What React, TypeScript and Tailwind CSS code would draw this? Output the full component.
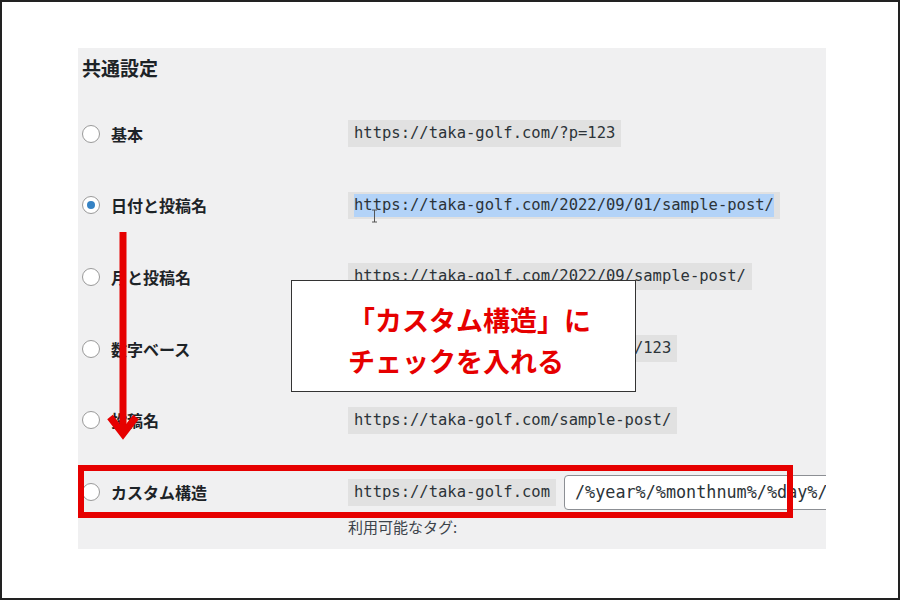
import React from "react";

const jp = { fontFamily: '"Noto Sans CJK JP", "Noto Sans", sans-serif' };
const mono = { fontFamily: '"DejaVu Sans Mono", "Liberation Mono", monospace' };

function Radio({ checked = false }: { checked?: boolean }) {
  return (
    <span className="flex h-[18px] w-[18px] shrink-0 items-center justify-center rounded-full border border-[#9a9a9a] bg-white">
      {checked && <span className="h-[8px] w-[8px] rounded-full bg-[#3582c4]" />}
    </span>
  );
}

function Code({ children, selected = false }: { children: React.ReactNode; selected?: boolean }) {
  return (
    <span
      className="inline-flex shrink-0 items-center whitespace-nowrap bg-[#e1e1e1] px-[6px] py-[2px] text-[15.5px] leading-[23px] text-[#2c3338]"
      style={mono}
    >
      <span className={selected ? "bg-[#b3d3f8]" : ""}>{children}</span>
    </span>
  );
}

function Label({ text, checked }: { text: string; checked?: boolean }) {
  return (
    <div className="flex w-[270px] shrink-0 items-center gap-[11px] pl-[4px]">
      <Radio checked={checked} />
      <span className="whitespace-nowrap text-[16px] font-semibold text-[#1d2327]" style={jp}>
        {text}
      </span>
    </div>
  );
}

function Row({ label, url, checked, selected }: { label: string; url: string; checked?: boolean; selected?: boolean }) {
  return (
    <div className="flex h-[71.6px] items-center">
      <Label text={label} checked={checked} />
      <Code selected={selected}>{url}</Code>
    </div>
  );
}

export default function App() {
  return (
    <div className="relative h-[600px] w-[900px] overflow-hidden bg-white shadow-[inset_0_0_0_2px_#222]">
      <div className="ml-[78px] mt-[48px] h-[501px] w-[748px] overflow-hidden bg-[#f0f0f1]">
        <div className="pl-[4px] pt-[8px] text-[19px] font-bold leading-[24px] text-[#1d2327]" style={jp}>
          共通設定
        </div>
        <div className="mt-[18px] flex flex-col">
          <Row label="基本" url="https://taka-golf.com/?p=123" />
          <Row label="日付と投稿名" url="https://taka-golf.com/2022/09/01/sample-post/" checked selected />
          <Row label="月と投稿名" url="https://taka-golf.com/2022/09/sample-post/" />
          <Row label="数字ベース" url="https://taka-golf.com/archives/123" />
          <Row label="投稿名" url="https://taka-golf.com/sample-post/" />
          <div className="flex items-center pt-[19px]">
            <Label text="カスタム構造" />
            <Code>https://taka-golf.com</Code>
            <div
              className="ml-[8px] flex h-[35px] w-[320px] shrink-0 items-center overflow-hidden whitespace-nowrap rounded-[4px] border border-[#8c8f94] bg-white pl-[10px] text-[16.8px] text-[#2c3338]"
              style={mono}
            >
              /%year%/%monthnum%/%day%/%postname%/
            </div>
          </div>
          <div className="ml-[270px] mt-[7px] whitespace-nowrap text-[15px] leading-[20px] text-[#3c434a]" style={jp}>
            利用可能なタグ:
          </div>
        </div>
      </div>

      {/* text cursor */}
      <svg className="absolute left-[371px] top-[209px]" width="7" height="14" viewBox="0 0 7 14">
        <path d="M1 1h5M3.5 1v12M1 13h5" stroke="#555" strokeWidth="1" fill="none" />
      </svg>

      {/* red arrow */}
      <svg className="absolute left-[100px] top-[228px]" width="46" height="216" viewBox="0 0 46 216">
        <path d="M23 4V204" stroke="#e60000" strokeWidth="7" fill="none" />
        <path d="M10 189L23 206L36 189" stroke="#e60000" strokeWidth="7" fill="none" strokeLinejoin="miter" />
      </svg>

      {/* red highlight rectangle */}
      <div className="absolute left-[78px] top-[465px] h-[53px] w-[715px] border-[6px] border-[#e60000]" />

      {/* callout */}
      <div
        className="absolute left-[291px] top-[280px] h-[112px] w-[345px] border border-[#333] bg-white pl-[56px] pt-[18px] text-[27px] font-bold leading-[41px] text-[#e60000]"
        style={jp}
      >
        <div>「カスタム構造」に</div>
        <div>チェックを入れる</div>
      </div>
    </div>
  );
}
